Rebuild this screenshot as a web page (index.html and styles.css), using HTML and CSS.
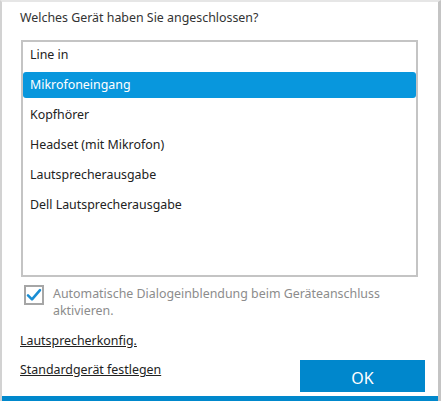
FILE: index.html
```html
<!DOCTYPE html>
<html lang="de">
<head>
<meta charset="utf-8">
<title>Gerät</title>
<link rel="stylesheet" href="styles.css">
</head>
<body>
<div class="win">
  <div class="content">
    <div class="title">Welches Gerät haben Sie angeschlossen?</div>
    <ul class="list">
      <li class="item">Line in</li>
      <li class="item selected">Mikrofoneingang</li>
      <li class="item">Kopfhörer</li>
      <li class="item">Headset (mit Mikrofon)</li>
      <li class="item">Lautsprecherausgabe</li>
      <li class="item">Dell Lautsprecherausgabe</li>
    </ul>
    <div class="check-row">
      <span class="checkbox">
        <svg viewBox="0 0 20 20" width="16" height="16"><path d="M2.5 10.5 L7.5 15.5 L17.5 4" fill="none" stroke="#1a8ed4" stroke-width="3.2" stroke-linecap="round" stroke-linejoin="round"/></svg>
      </span>
      <span class="check-label">Automatische Dialogeinblendung beim Geräteanschluss aktivieren.</span>
    </div>
    <a class="link first" href="#">Lautsprecherkonfig.</a>
    <div class="bottom-row">
      <a class="link" href="#">Standardgerät festlegen</a>
      <button class="ok" type="button">OK</button>
    </div>
  </div>
  <div class="bar"></div>
</div>
</body>
</html>
```
FILE: styles.css
```css
html, body {
  margin: 0;
  padding: 0;
  background: #fff;
}
body {
  font-family: "Noto Sans", "Open Sans", sans-serif;
  font-size: 12.4px;
  color: #222;
}
.win {
  width: 441px;
  height: 401px;
  box-sizing: border-box;
  border-top: 2px solid #e6e6e6;
  border-left: 2px solid #d2d2d2;
  border-right: 3px solid #c4c4c4;
  display: flex;
  flex-direction: column;
}
.content {
  flex: 1;
  padding: 7px 13px 0 18px;
  display: flex;
  flex-direction: column;
}
.title {
  line-height: 18px;
  color: #333;
}
.list {
  list-style: none;
  margin: 13px 0 0 1px;
  padding: 0;
  width: 397px;
  height: 237px;
  box-sizing: border-box;
  border: 2px solid #c4c4c4;
}
.item {
  height: 26px;
  line-height: 26px;
  padding-left: 7px;
  margin-bottom: 4px;
  border-radius: 3px;
  color: #222;
}
.item.selected {
  background: #0897dd;
  color: #fff;
}
.check-row {
  display: flex;
  align-items: flex-start;
  margin-top: 8px;
}
.checkbox {
  width: 20px;
  height: 20px;
  box-sizing: border-box;
  border: 2px solid #a6a6a6;
  margin-left: 4px;
  display: flex;
  align-items: center;
  justify-content: center;
  flex: none;
}
.check-label {
  margin-left: 9px;
  line-height: 17px;
  color: #8c8c8c;
  width: 360px;
}
.link {
  color: #222;
  text-decoration: underline;
  line-height: 18px;
}
.link.first {
  margin-top: 13px;
  align-self: flex-start;
}
.bottom-row {
  display: flex;
  justify-content: space-between;
  align-items: flex-start;
  margin-top: 10px;
}
.bottom-row .link {
  padding-top: 1px;
}
.ok {
  width: 125px;
  height: 32px;
  border: none;
  background: #0087cc;
  color: #fff;
  font-family: "Noto Sans", "Open Sans", sans-serif;
  font-size: 16px;
  padding: 3px 0 0 0;
}
.bar {
  height: 5px;
  background: #0088cc;
  flex: none;
}
```
